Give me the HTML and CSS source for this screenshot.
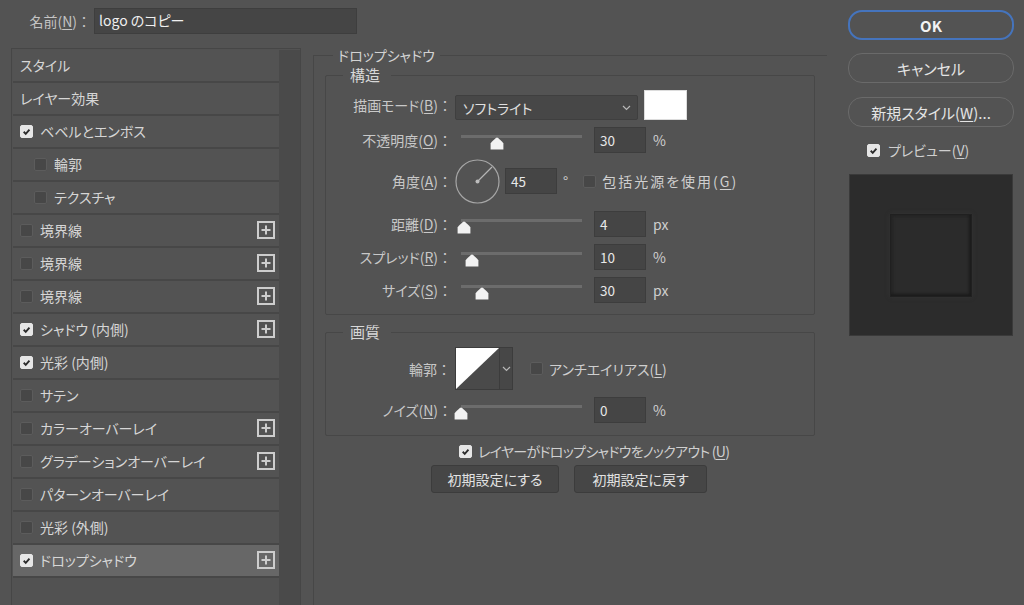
FILE: index.html
```html
<!DOCTYPE html>
<html lang="ja">
<head>
<meta charset="utf-8">
<title>レイヤースタイル</title>
<link rel="stylesheet" href="styles.css">
</head>
<body>
<div class="dialog">
  <div class="main">
    <div class="name-row">
      <span class="name-label">名前(<u>N</u>)<span class="colon">：</span></span>
      <div class="name-input">logo のコピー</div>
    </div>
    <div class="body">
      <div class="list-panel">
        <ul class="list">
          <li class="item"><span class="txt0">スタイル</span></li>
          <li class="item"><span class="txt0">レイヤー効果</span></li>
          <li class="item"><span class="cb on"><svg viewBox="0 0 13 13"><path d="M3.2 6.8 L5.6 9.2 L10 4.2"/></svg></span><span class="txt">ベベルとエンボス</span></li>
          <li class="item indent"><span class="cb"></span><span class="txt">輪郭</span></li>
          <li class="item indent"><span class="cb"></span><span class="txt">テクスチャ</span></li>
          <li class="item"><span class="cb"></span><span class="txt">境界線</span><span class="plus"><svg viewBox="0 0 18 18"><rect x="1" y="1" width="16" height="16"/><path d="M9 4.5V13.5M4.5 9H13.5"/></svg></span></li>
          <li class="item"><span class="cb"></span><span class="txt">境界線</span><span class="plus"><svg viewBox="0 0 18 18"><rect x="1" y="1" width="16" height="16"/><path d="M9 4.5V13.5M4.5 9H13.5"/></svg></span></li>
          <li class="item"><span class="cb"></span><span class="txt">境界線</span><span class="plus"><svg viewBox="0 0 18 18"><rect x="1" y="1" width="16" height="16"/><path d="M9 4.5V13.5M4.5 9H13.5"/></svg></span></li>
          <li class="item"><span class="cb on"><svg viewBox="0 0 13 13"><path d="M3.2 6.8 L5.6 9.2 L10 4.2"/></svg></span><span class="txt">シャドウ (内側)</span><span class="plus"><svg viewBox="0 0 18 18"><rect x="1" y="1" width="16" height="16"/><path d="M9 4.5V13.5M4.5 9H13.5"/></svg></span></li>
          <li class="item"><span class="cb on"><svg viewBox="0 0 13 13"><path d="M3.2 6.8 L5.6 9.2 L10 4.2"/></svg></span><span class="txt">光彩 (内側)</span></li>
          <li class="item"><span class="cb"></span><span class="txt">サテン</span></li>
          <li class="item"><span class="cb"></span><span class="txt">カラーオーバーレイ</span><span class="plus"><svg viewBox="0 0 18 18"><rect x="1" y="1" width="16" height="16"/><path d="M9 4.5V13.5M4.5 9H13.5"/></svg></span></li>
          <li class="item"><span class="cb"></span><span class="txt">グラデーションオーバーレイ</span><span class="plus"><svg viewBox="0 0 18 18"><rect x="1" y="1" width="16" height="16"/><path d="M9 4.5V13.5M4.5 9H13.5"/></svg></span></li>
          <li class="item"><span class="cb"></span><span class="txt">パターンオーバーレイ</span></li>
          <li class="item"><span class="cb"></span><span class="txt">光彩 (外側)</span></li>
          <li class="item sel"><span class="cb on"><svg viewBox="0 0 13 13"><path d="M3.2 6.8 L5.6 9.2 L10 4.2"/></svg></span><span class="txt">ドロップシャドウ</span><span class="plus"><svg viewBox="0 0 18 18"><rect x="1" y="1" width="16" height="16"/><path d="M9 4.5V13.5M4.5 9H13.5"/></svg></span></li>
        </ul>
        <div class="scroll"></div>
      </div>

      <fieldset class="settings">
        <legend>ドロップシャドウ</legend>

        <fieldset class="group structure">
          <legend>構造</legend>
          <div class="row row-mode">
            <span class="lbl">描画モード(<u>B</u>)<span class="colon">：</span></span>
            <div class="select"><span>ソフトライト</span><svg class="chev" viewBox="0 0 9 6"><path d="M1 1 L4.5 4.5 L8 1"/></svg></div>
            <div class="swatch"></div>
          </div>
          <div class="row r2">
            <span class="lbl">不透明度(<u>O</u>)<span class="colon">：</span></span>
            <div class="slider"><div class="track"></div><svg class="thumb" style="left:35px" viewBox="0 0 14 13"><path d="M7 0.6 C8 0.6 13.4 5.6 13.4 6.6 V12.4 H0.6 V6.6 C0.6 5.6 6 0.6 7 0.6 Z"/></svg></div>
            <div class="num">30</div><span class="unit">%</span>
          </div>
          <div class="row row-angle">
            <span class="lbl">角度(<u>A</u>)<span class="colon">：</span></span>
            <svg class="dial" viewBox="0 0 45 45"><circle cx="22.5" cy="22.5" r="21.5" class="ring"/><path d="M22.5 22.5 L37 8" class="hand"/><circle cx="22.5" cy="22.5" r="2" class="dot"/></svg>
            <div class="num">45</div><span class="deg">°</span>
            <span class="cb gl"></span><span class="cbl wide">包括光源を使用(<u>G</u>)</span>
          </div>
          <div class="row r4">
            <span class="lbl">距離(<u>D</u>)<span class="colon">：</span></span>
            <div class="slider"><div class="track"></div><svg class="thumb" style="left:2px" viewBox="0 0 14 13"><path d="M7 0.6 C8 0.6 13.4 5.6 13.4 6.6 V12.4 H0.6 V6.6 C0.6 5.6 6 0.6 7 0.6 Z"/></svg></div>
            <div class="num">4</div><span class="unit">px</span>
          </div>
          <div class="row r5">
            <span class="lbl">スプレッド(<u>R</u>)<span class="colon">：</span></span>
            <div class="slider"><div class="track"></div><svg class="thumb" style="left:10px" viewBox="0 0 14 13"><path d="M7 0.6 C8 0.6 13.4 5.6 13.4 6.6 V12.4 H0.6 V6.6 C0.6 5.6 6 0.6 7 0.6 Z"/></svg></div>
            <div class="num">10</div><span class="unit">%</span>
          </div>
          <div class="row r5">
            <span class="lbl">サイズ(<u>S</u>)<span class="colon">：</span></span>
            <div class="slider"><div class="track"></div><svg class="thumb" style="left:20px" viewBox="0 0 14 13"><path d="M7 0.6 C8 0.6 13.4 5.6 13.4 6.6 V12.4 H0.6 V6.6 C0.6 5.6 6 0.6 7 0.6 Z"/></svg></div>
            <div class="num">30</div><span class="unit">px</span>
          </div>
        </fieldset>

        <fieldset class="group quality">
          <legend>画質</legend>
          <div class="row row-contour">
            <span class="lbl">輪郭<span class="colon">：</span></span>
            <div class="contour"><svg viewBox="0 0 44 43" preserveAspectRatio="none"><rect width="44" height="43" fill="#4a4a4a"/><polygon points="0,0 44,0 0,43" fill="#ffffff"/></svg></div>
            <div class="contour-dd"><svg class="chev" viewBox="0 0 9 6"><path d="M1 1 L4.5 4.5 L8 1"/></svg></div>
            <span class="cb aa"></span><span class="cbl">アンチエイリアス(<u>L</u>)</span>
          </div>
          <div class="row r2">
            <span class="lbl">ノイズ(<u>N</u>)<span class="colon">：</span></span>
            <div class="slider"><div class="track"></div><svg class="thumb" style="left:-1px" viewBox="0 0 14 13"><path d="M7 0.6 C8 0.6 13.4 5.6 13.4 6.6 V12.4 H0.6 V6.6 C0.6 5.6 6 0.6 7 0.6 Z"/></svg></div>
            <div class="num">0</div><span class="unit">%</span>
          </div>
        </fieldset>

        <div class="knockout">
          <span class="cb on"><svg viewBox="0 0 13 13"><path d="M3.2 6.8 L5.6 9.2 L10 4.2"/></svg></span><span class="cbl tight">レイヤーがドロップシャドウをノックアウト (<u>U</u>)</span>
        </div>
        <div class="buttons">
          <button class="btn b1">初期設定にする</button>
          <button class="btn b2">初期設定に戻す</button>
        </div>
      </fieldset>
    </div>
  </div>

  <div class="side">
    <button class="pill ok">OK</button>
    <button class="pill">キャンセル</button>
    <button class="pill">新規スタイル(<u>W</u>)...</button>
    <div class="preview-row">
      <span class="cb on"><svg viewBox="0 0 13 13"><path d="M3.2 6.8 L5.6 9.2 L10 4.2"/></svg></span><span class="cbl">プレビュー(<u>V</u>)</span>
    </div>
    <div class="preview"><div class="preview-sq"></div></div>
  </div>
</div>
</body>
</html>
```

FILE: styles.css
```css
* { box-sizing: border-box; }
html, body { margin: 0; padding: 0; }
body {
  width: 1024px;
  height: 605px;
  overflow: hidden;
  background: #535353;
  font-family: "Noto Sans CJK JP", "Noto Sans", sans-serif;
  font-size: 14px;
  color: #cfcfcf;
  font-feature-settings: "palt";
}
u { text-decoration-thickness: 1px; text-underline-offset: 2px; }
.colon { font-feature-settings: normal; }

.dialog { display: flex; padding: 8px 10px 0 11px; height: 605px; }
.main { width: 816px; display: flex; flex-direction: column; }

/* name */
.name-row { display: flex; align-items: center; height: 26px; margin-bottom: 12px; }
.name-label { width: 80px; text-align: right; color: #c4c4c4; }
.name-input {
  margin-left: 3px; width: 263px; height: 26px;
  background: #454545; border: 1px solid #3e3e3e;
  color: #f0f0f0; padding-left: 4px; line-height: 23px;
}

.body { display: flex; align-items: flex-start; }

/* list */
.list-panel {
  margin-top: 2px; width: 290px; height: 570px;
  border: 1px solid #464646; display: flex;
  padding: 1px 0 0 1px; background: #525252;
}
.list { list-style: none; margin: 0; padding: 0; width: 266px; }
.scroll { flex: 1; background: #4a4a4a; }
.item {
  height: 33px; border-bottom: 2px solid #474747;
  display: flex; align-items: center;
  padding: 0 4px 1px 7px; color: #d6d6d6; background: #535353;
}
.item.indent { padding-left: 21px; }
.item.sel { background: #676767; }
.txt { margin-left: 7px; }
.plus { margin-left: auto; width: 18px; height: 18px; display: flex; }
.plus svg { width: 18px; height: 18px; fill: none; stroke: #cdcdcd; stroke-width: 2; }

/* checkbox */
.cb {
  width: 13px; height: 13px; flex: none; border-radius: 2px;
  background: #474747; border: 1px solid #5c5c5c; display: flex;
}
.cb.on { background: #e6e6e6; border-color: #e6e6e6; }
.cb svg { width: 11px; height: 11px; fill: none; stroke: #2b2b2b; stroke-width: 2.2; }
.cbl { margin-left: 6px; }
.cbl.wide { letter-spacing: 2px; }
.cbl.tight { letter-spacing: -0.7px; }

/* settings */
.settings {
  margin: 0 0 0 12px; padding: 0 0 0 11px; min-width: 0;
  width: 514px; border: 0;
  border-left: 1px solid #474747; border-top: 1px solid #474747;
  height: 560px;
}
.settings > legend { margin-left: 8px; padding: 0 5px; line-height: 18px; color: #d2d2d2; }

.group {
  margin: 1px 0 0; padding: 5px 0 11px 0; min-width: 0;
  width: 490px; border: 1px solid #474747; border-radius: 2px;
}
.group > legend {
  margin-left: 17px; padding: 0 11px 0 7px;
  line-height: 20px; font-size: 15px; color: #d8d8d8;
}
.quality { margin-top: 7px; padding-bottom: 12px; }

.row { display: flex; align-items: center; height: 26px; }
.lbl { width: 129px; padding-right: 3px; text-align: right; color: #c8c8c8; flex: none; }
.row-mode { height: 30px; align-items: flex-end; }
.row-mode .lbl { align-self: center; }
.r2 { margin-top: 7px; }
.row-angle { height: 44px; margin-top: 6px; }
.r4 { margin-top: 8px; }
.r5 { margin-top: 7px; }

.select {
  width: 183px; height: 25px; margin-right: 6px;
  background: #474747; border: 1px solid #3f3f3f; border-radius: 2px;
  display: flex; align-items: center; padding: 0 6px 0 7px; color: #e0e0e0;
}
.chev { width: 9px; height: 6px; fill: none; stroke: #b8b8b8; stroke-width: 1.2; }
.select .chev { margin-left: auto; }
.swatch { width: 43px; height: 30px; background: #ffffff; border: 1px solid #dcdcdc; }

.slider { width: 132px; height: 26px; margin-right: 7px; position: relative; flex: none; }
.track { margin: 8px 0 0 6px; width: 121px; height: 3px; background: #6c6c6c; }
.thumb { position: absolute; top: 10px; width: 14px; height: 13px; fill: #f2f2f2; }

.num {
  width: 52px; height: 26px; flex: none;
  background: #454545; border: 1px solid #3d3d3d;
  color: #e8e8e8; padding-left: 5px; line-height: 24px; font-size: 13.5px;
}
.unit { margin-left: 7px; color: #cfcfcf; }
.deg { margin-left: 6px; color: #cfcfcf; }
.cb.gl { margin-left: 15px; }

.dial { width: 45px; height: 45px; margin-right: 5px; flex: none; }
.dial .ring { fill: none; stroke: #a6a6a6; stroke-width: 1.2; }
.dial .hand { stroke: #b4b4b4; stroke-width: 1.2; }
.dial .dot { fill: #bdbdbd; }

.row-contour { height: 43px; }
.row-contour .lbl { padding-right: 4px; }
.contour { width: 44px; height: 43px; display: flex; border: 1px solid #3c3c3c; border-right: 0; }
.contour svg { width: 100%; height: 100%; }
.contour-dd {
  width: 14px; height: 43px; background: #474747;
  border: 1px solid #3c3c3c; display: flex; align-items: center; justify-content: center;
}
.cb.aa { margin-left: 17px; }

.knockout { display: flex; align-items: center; height: 18px; margin-top: 6px; padding-left: 134px; }
.buttons { display: flex; gap: 15px; margin-top: 5px; padding-left: 106px; }
.btn {
  height: 28px; background: #464646; border: 1px solid #3c3c3c; border-radius: 3px;
  font: inherit; color: #e2e2e2; padding: 0; cursor: default;
}
.b1 { width: 128px; }
.b2 { width: 133px; }

/* side */
.side { margin-left: 21px; width: 166px; padding-top: 2px; display: flex; flex-direction: column; }
.pill {
  height: 30px; width: 166px; border-radius: 14px;
  background: transparent; border: 1px solid #6a6a6a;
  font: inherit; font-size: 15px; color: #e4e4e4; padding: 0; margin-top: 13px;
}
.pill + .pill + .pill { margin-top: 14px; }
.pill.ok { margin-top: 0; border: 2px solid #4574bd; font-weight: 700; color: #f2f2f2; }
.preview-row { display: flex; align-items: center; height: 14px; margin-top: 16px; padding-left: 19px; }
.preview-row .cbl { margin-left: 8px; }
.preview {
  margin: 17px 0 0 1px; width: 164px; height: 162px;
  background: #2c2c2c; border: 1px solid #3a3a3a;
  display: flex; align-items: center; justify-content: center;
}
.preview-sq {
  width: 82px; height: 83px; background: #2b2b2b;
  border: 1px solid #202020;
  box-shadow: inset -2px -2px 3px #1b1b1b, inset 2px 2px 3px #242424, 0 0 4px #353535;
}
```
